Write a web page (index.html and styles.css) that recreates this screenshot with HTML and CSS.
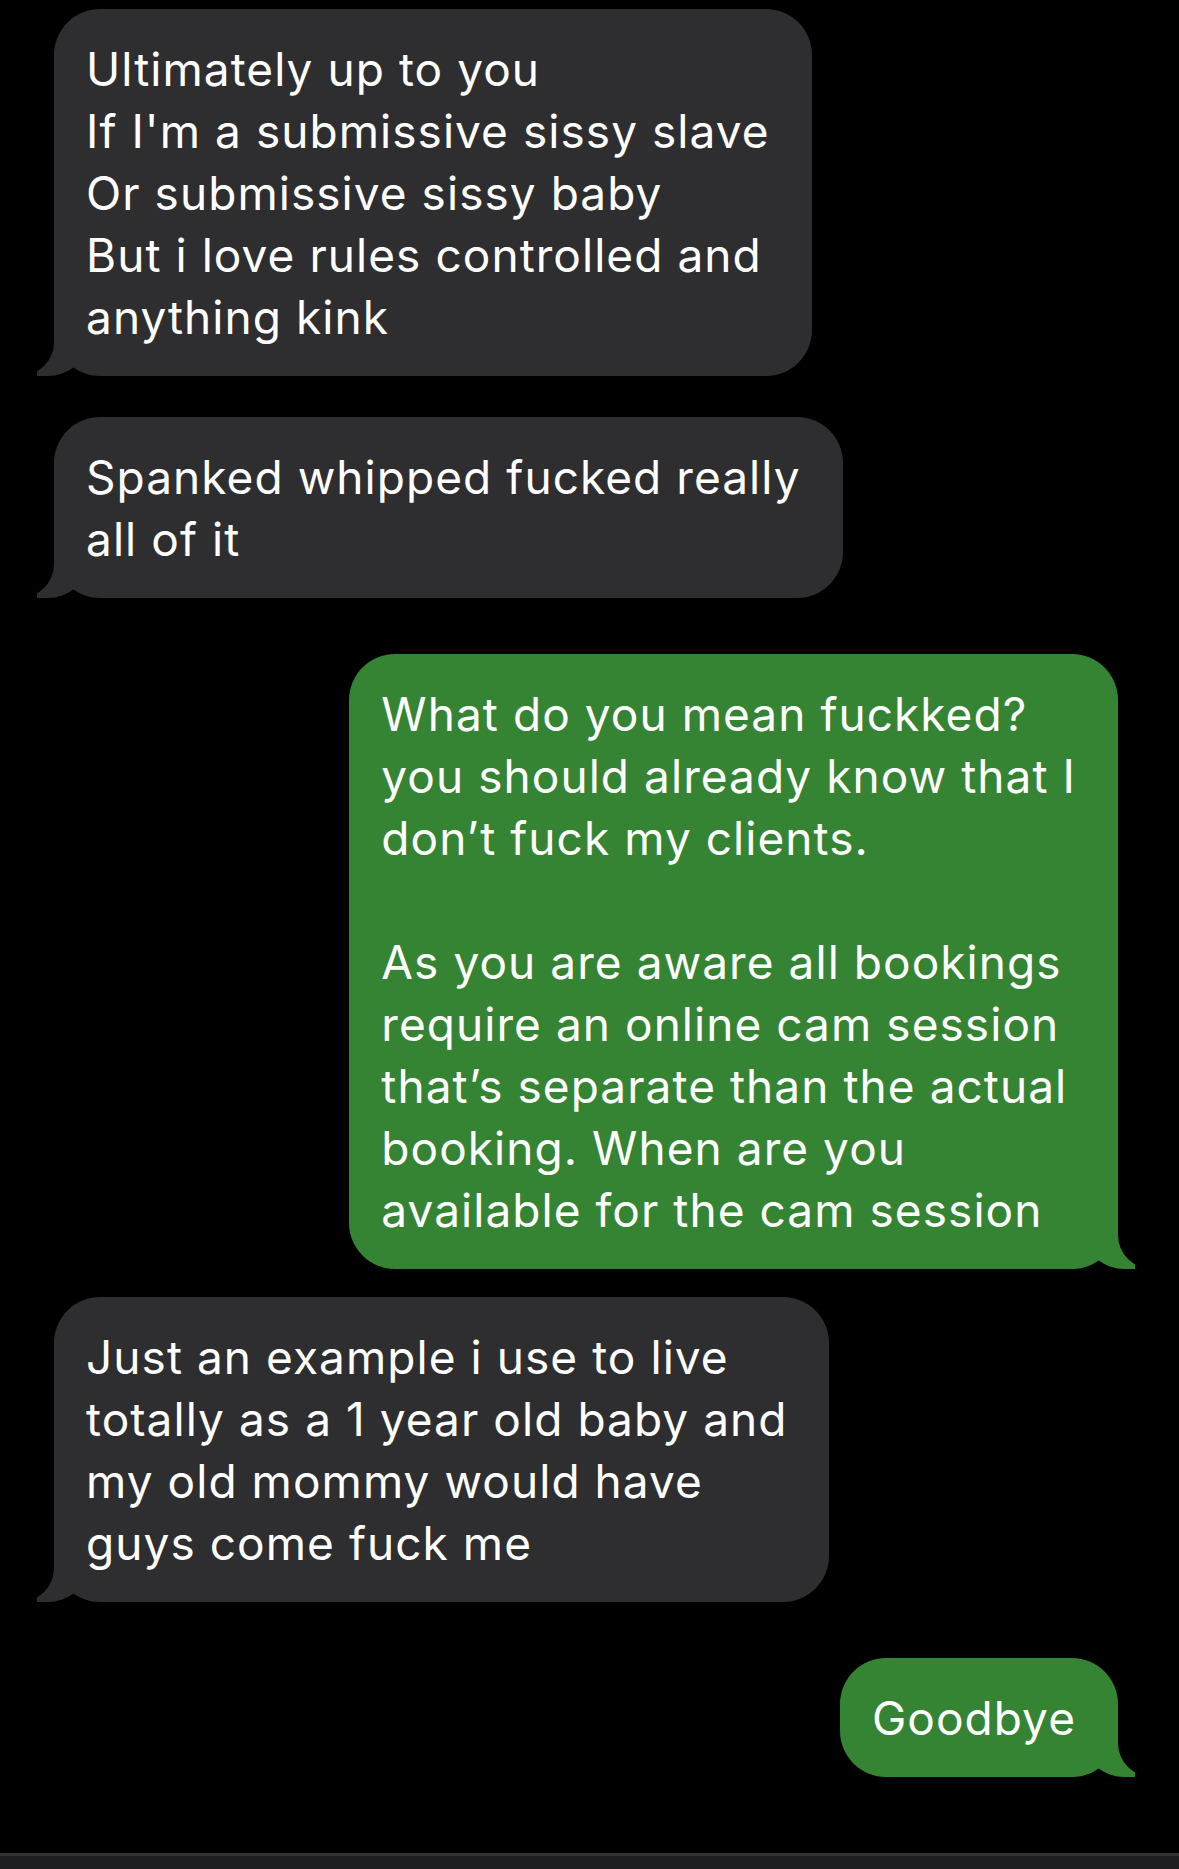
FILE: index.html
```html
<!DOCTYPE html>
<html lang="en">
<head>
    <meta charset="UTF-8">
    <meta name="viewport" content="width=device-width, initial-scale=1.0">
    <title>Messages</title>
    <link rel="stylesheet" href="styles.css">
</head>
<body>
    <div class="screen">
        <div class="thread">

            <div class="bubble them">
                Ultimately up to you<br>
                If I'm a submissive sissy slave<br>
                Or submissive sissy baby<br>
                But i love rules controlled and<br>
                anything kink
            </div>

            <div class="bubble them gap-md">
                Spanked whipped fucked really<br>
                all of it
            </div>

            <div class="bubble me gap-lg">
                What do you mean fuckked?<br>
                you should already know that I<br>
                don’t fuck my clients.<br>
                <br>
                As you are aware all bookings<br>
                require an online cam session<br>
                that’s separate than the actual<br>
                booking. When are you<br>
                available for the cam session
            </div>

            <div class="bubble them gap-sm">
                Just an example i use to live<br>
                totally as a 1 year old baby and<br>
                my old mommy would have<br>
                guys come fuck me
            </div>

            <div class="bubble me gap-lg">
                Goodbye
            </div>

        </div>

        <!-- input bar peeking in at the bottom -->
        <div class="bottom-bar"></div>
    </div>
</body>
</html>
```

FILE: styles.css
```css
body {
    margin: 0;
    background-color: #000;
    font-family: Inter, "Noto Sans", sans-serif;
    color: #fff;
}

.screen {
    min-height: 100vh;
    display: flex;
    flex-direction: column;
}

.thread {
    display: flex;
    flex-direction: column;
    padding: 9px 61px 0 54px;
}

.bubble {
    position: relative;
    width: fit-content;
    padding: 29px 42px 28px 32px;
    border-radius: 46px;
    font-size: 46px;
    line-height: 62px;
    letter-spacing: 1.05px;
    white-space: nowrap;
}

.them {
    align-self: flex-start;
    background-color: #2e2e30;
}

.me {
    align-self: flex-end;
    background-color: #358433;
}

.gap-sm {
    margin-top: 28px;
}

.gap-md {
    margin-top: 41px;
}

.gap-lg {
    margin-top: 56px;
}

/* tails */
.bubble::before,
.bubble::after {
    content: "";
    position: absolute;
    bottom: 0;
    height: 60px;
}

.them::before {
    left: -17px;
    width: 50px;
    background-color: #2e2e30;
    border-bottom-right-radius: 40px 34px;
}

.them::after {
    left: -62px;
    width: 62px;
    background-color: #000;
    border-bottom-right-radius: 34px;
}

.me::before {
    right: -17px;
    width: 50px;
    background-color: #358433;
    border-bottom-left-radius: 40px 34px;
}

.me::after {
    right: -62px;
    width: 62px;
    background-color: #000;
    border-bottom-left-radius: 34px;
}

.bottom-bar {
    margin-top: auto;
    height: 13px;
    background-color: #1e1e20;
    border-top: 3px solid #323234;
}
```
